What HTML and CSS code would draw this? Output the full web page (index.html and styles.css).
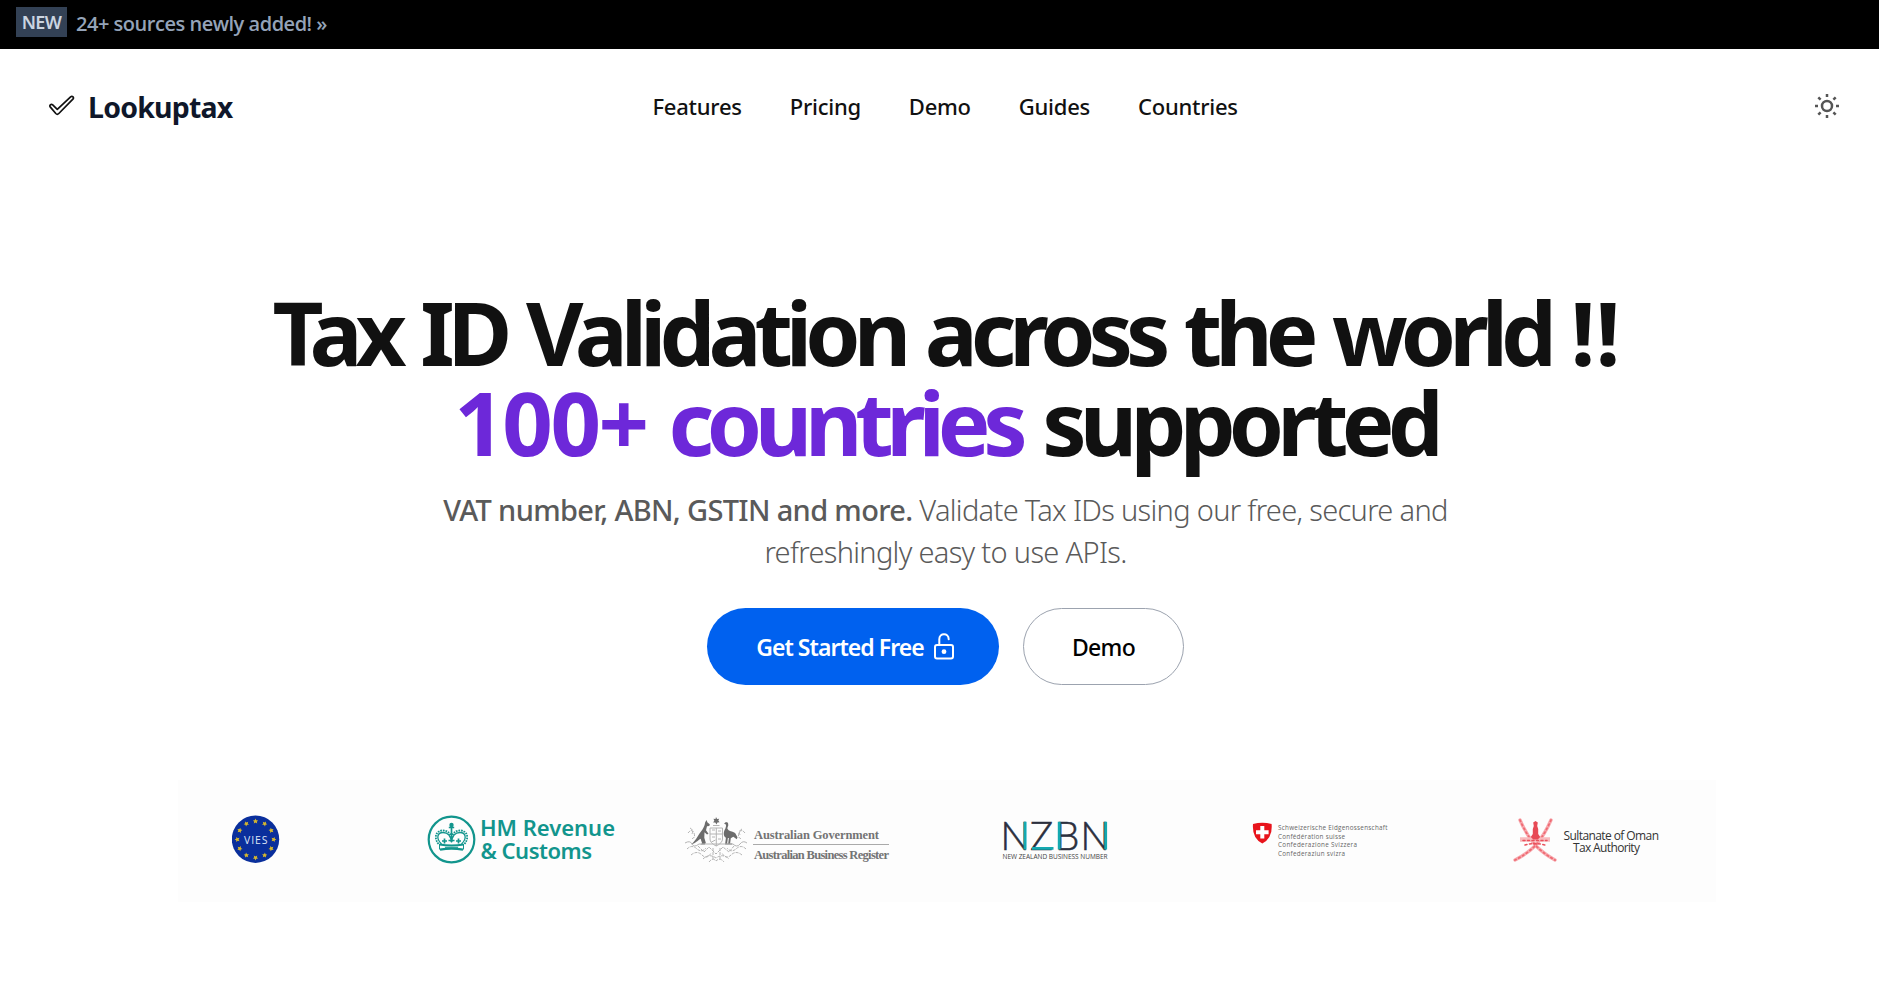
FILE: index.html
```html
<!DOCTYPE html>
<html lang="en">
<head>
<meta charset="utf-8">
<title>Lookuptax</title>
<link rel="stylesheet" href="styles.css">
</head>
<body>
<div class="banner"><span class="badge">NEW</span><a class="banner-link">24+ sources newly added! »</a></div>
<header class="header">
  <a class="brand">
    <svg class="check" viewBox="0 0 28 22" width="28" height="22"><path d="M2.4 12.100c-1.600-1.600.7-3.800 2.300-2.200l4.600 4.500L22.600 1.900c1.700-1.500 3.900.6 2.300 2.200L10.800 18.500c-1 1-2 1-3 0z" fill="none" stroke="#111" stroke-width="1.700" stroke-linejoin="round"/></svg>
    <span>Lookuptax</span>
  </a>
  <nav class="nav"><a>Features</a><a>Pricing</a><a>Demo</a><a>Guides</a><a>Countries</a></nav>
  <svg class="sun" viewBox="0 0 28 28" width="28" height="28" fill="none" stroke="#555" stroke-width="2.500"><circle cx="14" cy="14" r="5"/><path d="M14 2v3M14 23v3M2 14h3M23 14h3M5.300 5.300l2.300 2.300M20.400 20.400l2.300 2.300M5.300 22.700l2.300-2.300M20.400 7.600l2.300-2.300"/></svg>
</header>
<main class="hero">
  <h1 class="title"><span class="headline">Tax ID Validation across the world <span class="bangs">!!</span></span><br><span class="accent"><span class="count">100+</span> <span class="noun">countries</span></span> supported</h1>
  <p class="lead"><strong>VAT number, ABN, GSTIN and more.</strong> Validate Tax IDs using our free, secure and<br>refreshingly easy to use APIs.</p>
  <div class="actions">
    <a class="btn primary"><span>Get Started Free</span><svg viewBox="0 0 24 30" width="24" height="30" fill="none" stroke="#fff" stroke-width="2"><rect x="3" y="13" width="18" height="13.500" rx="2"/><path d="M7.300 13V7.200C7.300 .7 16.700 .7 16.700 7.200" stroke-linecap="round"/><circle cx="12" cy="19.700" r="2.400" fill="#fff" stroke="none"/></svg></a>
    <a class="btn outline">Demo</a>
  </div>
</main>
<section class="sources">
  <svg class="vies" viewBox="232 810 48 62" width="48" height="62">
    <circle cx="255.500" cy="839.200" r="23.700" fill="#0a2f9c"/>
    <g fill="#d9b92c"><path id="star" d="M255.500 818.600l.8 1.600 1.800.2-1.300 1.300.4 1.800-1.700-.9-1.700.9.400-1.800-1.300-1.300 1.800-.2z"/>
    <use href="#star" transform="rotate(30 255.5 839.5)"/><use href="#star" transform="rotate(60 255.5 839.5)"/><use href="#star" transform="rotate(90 255.5 839.5)"/><use href="#star" transform="rotate(120 255.5 839.5)"/><use href="#star" transform="rotate(150 255.5 839.5)"/><use href="#star" transform="rotate(180 255.5 839.5)"/><use href="#star" transform="rotate(210 255.5 839.5)"/><use href="#star" transform="rotate(240 255.5 839.5)"/><use href="#star" transform="rotate(270 255.5 839.5)"/><use href="#star" transform="rotate(300 255.5 839.5)"/><use href="#star" transform="rotate(330 255.5 839.5)"/></g>
    <text class="vies-t" x="244" y="843.800" textLength="23.500">VIES</text>
  </svg>
  <svg viewBox="418 810 206 62" width="206" height="62">
    <g fill="none" stroke="#12958d">
      <circle cx="451.500" cy="839.500" r="22.800" stroke-width="2.200"/>
      <path stroke-width="1.300" d="M441.500 844c-6-6-4-11.500 1.500-11.500 5 0 8 4 8.500 10M461.500 844c6-6 4-11.500-1.500-11.500-5 0-8 4-8.500 10"/>
      <path stroke-width="1.800" stroke-dasharray="1.700 .9" d="M438.500 844c-6-8-1-14 5-13.500 4 0 7 3 8 7M464.500 844c6-8 1-14-5-13.500-4 0-7 3-8 7"/>
      <path stroke-width="1.700" d="M451.500 824v18M448.800 827.500h5.400M444.500 838.500v5M458.500 838.500v5M442 841h5M456 841h5M448.500 840.500h6"/>
      <path stroke-width="2.200" d="M439.500 844.500q12 2 24 0M440 849.700q11.500-2 23 0"/>
      <path stroke-width="1" d="M439.500 844v5.500M463.500 844v5.500M445 847.300h13"/>
    </g>
    <circle cx="451.500" cy="825" r="2.200" fill="#12958d"/>
    <g class="hmrc"><text x="480" y="836" textLength="135">HM Revenue</text><text x="480.500" y="858.700" textLength="111.500">&amp; Customs</text></g>
  </svg>
  <svg viewBox="684 810 206 62" width="206" height="62">
    <g fill="#6c6c6c">
      <path d="M716 817l1.100 2 2.100-.3-.9 1.900 1.300 1.700-2.200.2-.9 2-1.200-1.900-2.200-.1 1.200-1.700-.8-2 2 .2z"/>
      <path d="M706.500 820l1 2.500 2.300 1.800-.5 1.700-2.300.3-1 4 2.500 3.500-1.500.8-2.500-2.300-.2 5.500 1.500 5-1 1.700h-4.500l1.800-1.200-1.500-4.500c-2 1-6 5.300-9.500 5.500 4-2.500 6.500-8.500 9.500-12.300 2.500-3 4.200-6.300 4.500-9.500z"/>
      <path d="M724 823.500l2-1.600 2 .9.300 2.500-1 3c1 3.500 5.500 2.500 8 5l2.200 4-.7 2-3.500-2.500-2.500 1.500-.7 5.200h2v.9h-4l.8-6.500-1 .2-.8 5.500h1.500v.9h-3.500l.8-6.700c-3-2-2.500-6-.5-9.300l.7-2.800-.5-1.500z"/>
    </g>
    <g fill="none" stroke="#b4b4b4" stroke-width="1">
      <path d="M710 828h12.500v11q0 4-6.300 7-6.200-3-6.200-7zM710 834h12.500M716.300 828v18M712 830h3M718 831h3M712 837h3M718 839h3M711.500 842l4-2M713 825.500h6.500"/>
      <path d="M685 843q5-3 7 1t7 0h34q4 4 7 0t7-1"/>
      <path stroke-dasharray="3 1" d="M688 833q4-5 6 0t-3 6M690 828q4 2 2 6M745 833q-4-5-6 0t3 6M742 829q-4 2-2 6M687 849q5-5 10 0 5 4 9-1M746 849q-5-5-10 0-5 4-9-1M691 855q6-5 11 0t9-2M742 855q-6-5-11 0t-9-2M703 859q6-6 13-1 7-5 13 1M709 862q4-5 7-1 4-4 8 1M698 846l6 6 5-5 7 7 7-7 6 5 5-6M713 848v12M720 848v12"/>
    </g>
    <path d="M753 844.500h136" stroke="#aaa" stroke-width="1"/>
    <g class="abr"><text x="754" y="839" textLength="125">Australian Government</text><text x="754" y="858.700" textLength="135">Australian Business Register</text></g>
  </svg>
  <svg viewBox="950 810 206 62" width="206" height="62">
    <text class="nzbn" y="849.500" x="1000.500 1030 1055 1080.500">NZBN</text>
    <path d="M1025 821.800v27.700M1032 848.400h21.500M1059.200 821.800v27.700M1105.700 821.800v27.700" fill="none" stroke="#14a9b0" stroke-width="2.800"/>
    <text class="nzbn-sub" x="1002.500" y="859" textLength="105">NEW ZEALAND BUSINESS NUMBER</text>
  </svg>
  <svg viewBox="1216 810 206 62" width="206" height="62">
    <path d="M1253 824q9.300-2.600 18.600 0 1.200 14.500-9.300 19.500-10.500-5-9.300-19.500z" fill="#e8141c"/>
    <path d="M1262.300 826v12.500M1256 832.200h12.600" stroke="#fff" stroke-width="4"/>
    <g class="swiss"><text x="1278" y="829.700" textLength="109.500">Schweizerische Eidgenossenschaft</text><text x="1278" y="838.500" textLength="67">Confédération suisse</text><text x="1278" y="847.300" textLength="79">Confederazione Svizzera</text><text x="1278" y="856.100" textLength="67">Confederaziun svizra</text></g>
  </svg>
  <svg viewBox="1482 810 206 62" width="206" height="62">
    <g fill="none" stroke-linecap="round">
      <path stroke="#f7abb0" stroke-width="3.400" d="M1520 820q6 14 15 25 9 9 20 15M1551 820q-6 14-15 25-9 9-21 15"/>
      <path stroke="#ef6a73" stroke-width="1.800" stroke-dasharray="1.500 3" d="M1520 820q6 14 15 25 9 9 20 15M1551 820q-6 14-15 25-9 9-21 15"/>
      <path stroke="#f7babd" stroke-width="4.500" stroke-linecap="butt" d="M1520 839.500h30"/>
      <path stroke="#e9505b" stroke-width="1.500" stroke-dasharray="2 2.500" d="M1523 840.500h24M1525 845q10-3 20 0"/>
    </g>
    <path d="M1535.500 821l2.300 1.500-.6 3.500 1 3v5l2 3-2.500 2.500h-4.400l-2.500-2.500 2-3v-5l1-3-.6-3.500z" fill="#e74a55"/>
    <g class="oman"><text x="1563.500" y="840" textLength="95.500">Sultanate of Oman</text><text x="1573" y="851.600" textLength="67">Tax Authority</text></g>
  </svg>
</section>
</body>
</html>
```
FILE: styles.css
```css
* { box-sizing: border-box; }
body { margin: 0; background: #fff; font-family: "Noto Sans", "Open Sans", sans-serif; color: #111; }
.banner { height: 49px; background: #000; display: flex; align-items: flex-start; padding: 7px 16px; gap: 9px; }
.badge { background: #334155; color: #cbd5e1; height: 30px; width: 51px; font: 600 18px/30px "Noto Sans", sans-serif; letter-spacing: -0.6px; text-align: center; }
.banner-link { color: #94a3b8; font: 550 20px/33px "Open Sans", sans-serif; letter-spacing: -0.48px; }
.header { height: 114px; display: flex; align-items: center; padding: 0 38px 0 48px; }
.brand { display: flex; align-items: center; gap: 12px; color: #0f172a; font-weight: 700; font-size: 28.5px; letter-spacing: -0.8px; width: 604.5px; }
.brand span { padding-top: 2px; }
.nav { display: flex; gap: 48px; font-size: 22px; font-weight: 460; letter-spacing: -0.25px; }
.sun { margin-left: auto; }
.hero { text-align: center; padding: 124px 0 0 12px; }
.title { margin: 0; font-size: 88.5px; line-height: 90px; font-weight: 660; letter-spacing: -6.8px; word-spacing: 5.5px; white-space: nowrap; }
.headline { letter-spacing: -7px; word-spacing: 4.5px; margin-left: 2px; }
.bangs { letter-spacing: 0; }
.accent { color: #6d28d9; }
.count { letter-spacing: -2.5px; }
.noun { letter-spacing: -7.3px; }
.lead { margin: 22px 0 35px; font-size: 29px; line-height: 42px; color: #5a5a5a; font-weight: 350; letter-spacing: -0.68px; }
.lead strong { font-weight: 500; letter-spacing: -0.66px; }
.actions { display: flex; justify-content: center; gap: 24px; }
.btn { height: 77px; border-radius: 39px; display: flex; align-items: center; justify-content: center; font-size: 23px; font-weight: 500; }
.primary { width: 292px; background: #0061ef; color: #fff; gap: 8px; font-weight: 580; letter-spacing: -0.95px; padding-left: 6px; }
.outline { width: 161px; border: 1px solid #9ca3af; color: #000; letter-spacing: -0.7px; }
.sources { margin: 95px 0 0 178px; width: 1538px; height: 122px; background: #fdfdfd; display: flex; gap: 60px; padding: 30px 0 0 54px; }
.sources svg { flex: none; }
.sources .vies { margin-right: 78px; }
.vies-t { font: 500 10.500px "Open Sans", sans-serif; fill: #dfe5f5; }
.hmrc { font: 600 22px "Noto Sans", sans-serif; fill: #12958d; }
.abr { font: 700 12.500px "Liberation Serif", serif; fill: #747474; }
.nzbn { font: 300 38.500px Lato, sans-serif; fill: #2b2f3d; stroke: #2b2f3d; stroke-width: 0.6px; }
.nzbn-sub { font: 400 6.500px "Open Sans", sans-serif; fill: #444; }
.swiss { font: 400 6.300px "Open Sans", sans-serif; fill: #666; }
.oman { font: 400 12px "Open Sans", sans-serif; fill: #333; }
```
